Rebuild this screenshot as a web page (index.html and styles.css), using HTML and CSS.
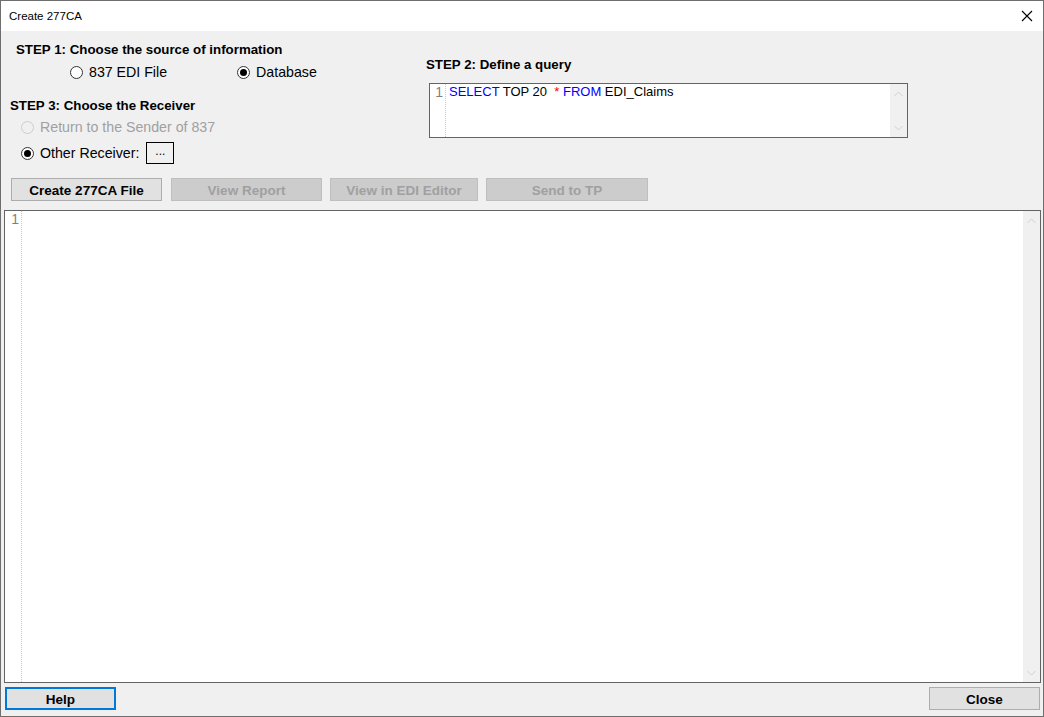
FILE: index.html
```html
<!DOCTYPE html>
<html lang="en">
<head>
  <meta charset="UTF-8">
  <title>Create 277CA</title>
  <link rel="stylesheet" href="styles.css">
</head>
<body>
  <div class="window">
    <div class="titlebar">
      <span class="title">Create 277CA</span>
      <svg class="close-x" width="12" height="12" viewBox="0 0 12 12">
        <path d="M1 1 L11 11 M11 1 L1 11" stroke="#000" stroke-width="1.1" fill="none"/>
      </svg>
    </div>
    <div class="content">
      <div class="top">
        <div class="left-col">
          <div class="step step1">STEP 1: Choose the source of information</div>
          <div class="source-row">
            <label class="radio"><span class="dot"></span>837 EDI File</label>
            <label class="radio"><span class="dot checked"></span>Database</label>
          </div>
          <div class="step step3">STEP 3: Choose the Receiver</div>
          <label class="radio disabled return"><span class="dot"></span>Return to the Sender of 837</label>
          <div class="other-row">
            <label class="radio"><span class="dot checked"></span>Other Receiver:</label>
            <button class="browse">...</button>
          </div>
        </div>
        <div class="right-col">
          <div class="step step2">STEP 2: Define a query</div>
          <div class="editor query">
            <div class="gutter">1</div>
            <div class="code"><span class="kw">SELECT</span> TOP 20&nbsp; <span class="op">*</span> <span class="kw">FROM</span> EDI_Claims</div>
            <div class="vscroll">
              <svg width="9" height="6" viewBox="0 0 9 6"><path d="M0.5 5 L4.5 1 L8.5 5" stroke="#d0d0d0" fill="none"/></svg>
              <svg width="9" height="6" viewBox="0 0 9 6"><path d="M0.5 1 L4.5 5 L8.5 1" stroke="#d0d0d0" fill="none"/></svg>
            </div>
          </div>
        </div>
      </div>

      <div class="actions">
        <button class="btn w151">Create 277CA File</button>
        <button class="btn w151" disabled>View Report</button>
        <button class="btn w148" disabled>View in EDI Editor</button>
        <button class="btn w162" disabled>Send to TP</button>
      </div>

      <div class="editor output">
        <div class="gutter">1</div>
        <div class="code"></div>
        <div class="vscroll">
          <svg width="9" height="6" viewBox="0 0 9 6"><path d="M0.5 5 L4.5 1 L8.5 5" stroke="#d0d0d0" fill="none"/></svg>
          <svg width="9" height="6" viewBox="0 0 9 6"><path d="M0.5 1 L4.5 5 L8.5 1" stroke="#d0d0d0" fill="none"/></svg>
        </div>
      </div>

      <div class="bottom">
        <button class="btn focused">Help</button>
        <button class="btn">Close</button>
      </div>
    </div>
  </div>
</body>
</html>
```

FILE: styles.css
```css
body {
  margin: 0;
  font-family: 'Liberation Sans', Arial, sans-serif;
  color: #000;
  background: #fff;
}

.window {
  width: 1044px;
  height: 717px;
  box-sizing: border-box;
  border: 1px solid #6e6e6e;
  display: flex;
  flex-direction: column;
  overflow: hidden;
}

.titlebar {
  height: 30px;
  background: #fff;
  display: flex;
  align-items: center;
  justify-content: space-between;
  padding: 0 10px 0 8px;
  flex-shrink: 0;
}

.title {
  font-size: 11.5px;
}

.content {
  flex: 1;
  background: #f0f0f0;
  display: flex;
  flex-direction: column;
  min-height: 0;
}

.top {
  display: flex;
  height: 147px;
  flex-shrink: 0;
}

.left-col {
  width: 416px;
  display: flex;
  flex-direction: column;
  align-items: flex-start;
}

.step {
  font-weight: bold;
  font-size: 13.3px;
  line-height: 16px;
}

.step1 {
  margin: 11px 0 0 15px;
}

.step3 {
  margin: 18px 0 0 9px;
}

.source-row {
  display: flex;
  margin: 6px 0 0 69px;
  gap: 70px;
}

.radio {
  display: flex;
  align-items: center;
  font-size: 14.2px;
  line-height: 16px;
  gap: 6px;
}

.dot {
  width: 11px;
  height: 11px;
  border: 1px solid #333;
  border-radius: 50%;
  background: #fff;
  position: relative;
  flex-shrink: 0;
}

.dot.checked::after {
  content: '';
  position: absolute;
  left: 2px;
  top: 2px;
  width: 7px;
  height: 7px;
  border-radius: 50%;
  background: #000;
}

.radio.disabled {
  color: #a0a0a0;
}

.radio.disabled .dot {
  border-color: #cccccc;
  background: #f0f0f0;
}

.return {
  margin: 5px 0 0 20px;
}

.other-row {
  display: flex;
  align-items: center;
  margin: 7px 0 0 20px;
  gap: 7px;
}

.browse {
  width: 28px;
  height: 22px;
  border: 1px solid #000;
  background: #f0f0f0;
  font-family: 'Liberation Sans', Arial, sans-serif;
  font-size: 12px;
  padding: 0 0 4px;
}

.right-col {
  display: flex;
  flex-direction: column;
  padding-left: 9px;
}

.step2 {
  margin-top: 26px;
}

.editor {
  display: flex;
  background: #fff;
  border: 1px solid #646464;
  font-size: 13px;
  line-height: 16px;
}

.query {
  width: 477px;
  height: 53px;
  margin: 10px 0 0 3px;
}

.gutter {
  color: #808080;
  text-align: right;
  border-right: 1px dotted #c8c8c8;
  padding: 0 2px 0 0;
  margin-right: 3px;
  font-size: 14px;
}

.query .gutter {
  width: 13px;
}

.output .gutter {
  width: 14px;
}

.code {
  flex: 1;
  white-space: pre;
}

.kw {
  color: #0000ff;
}

.op {
  color: #ff0000;
}

.vscroll {
  width: 17px;
  background: #f0f0f0;
  display: flex;
  flex-direction: column;
  align-items: center;
  justify-content: space-between;
  padding: 7px 0 6px;
  box-sizing: border-box;
}

.actions {
  display: flex;
  margin-left: 10px;
  height: 23px;
  flex-shrink: 0;
}

.actions .btn + .btn {
  margin-left: 8px;
}

.actions .btn:nth-child(2) {
  margin-left: 9px;
}

.btn {
  height: 23px;
  box-sizing: border-box;
  background: #e1e1e1;
  border: 1px solid #adadad;
  font-family: 'Liberation Sans', Arial, sans-serif;
  font-weight: bold;
  font-size: 13.5px;
  color: #000;
  padding: 1px 0 0;
}

.btn:disabled {
  background: #cccccc;
  border-color: #bfbfbf;
  color: #a0a0a0;
}

.w151 { width: 151px; }
.w148 { width: 148px; }
.w162 { width: 162px; }

.output {
  flex: 1;
  margin: 9px 2px 0 3px;
}

.bottom {
  display: flex;
  justify-content: space-between;
  padding: 4px 3px 6px 4px;
  flex-shrink: 0;
}

.bottom .btn {
  width: 111px;
}

.btn.focused {
  border: 2px solid #0078d7;
}
```
